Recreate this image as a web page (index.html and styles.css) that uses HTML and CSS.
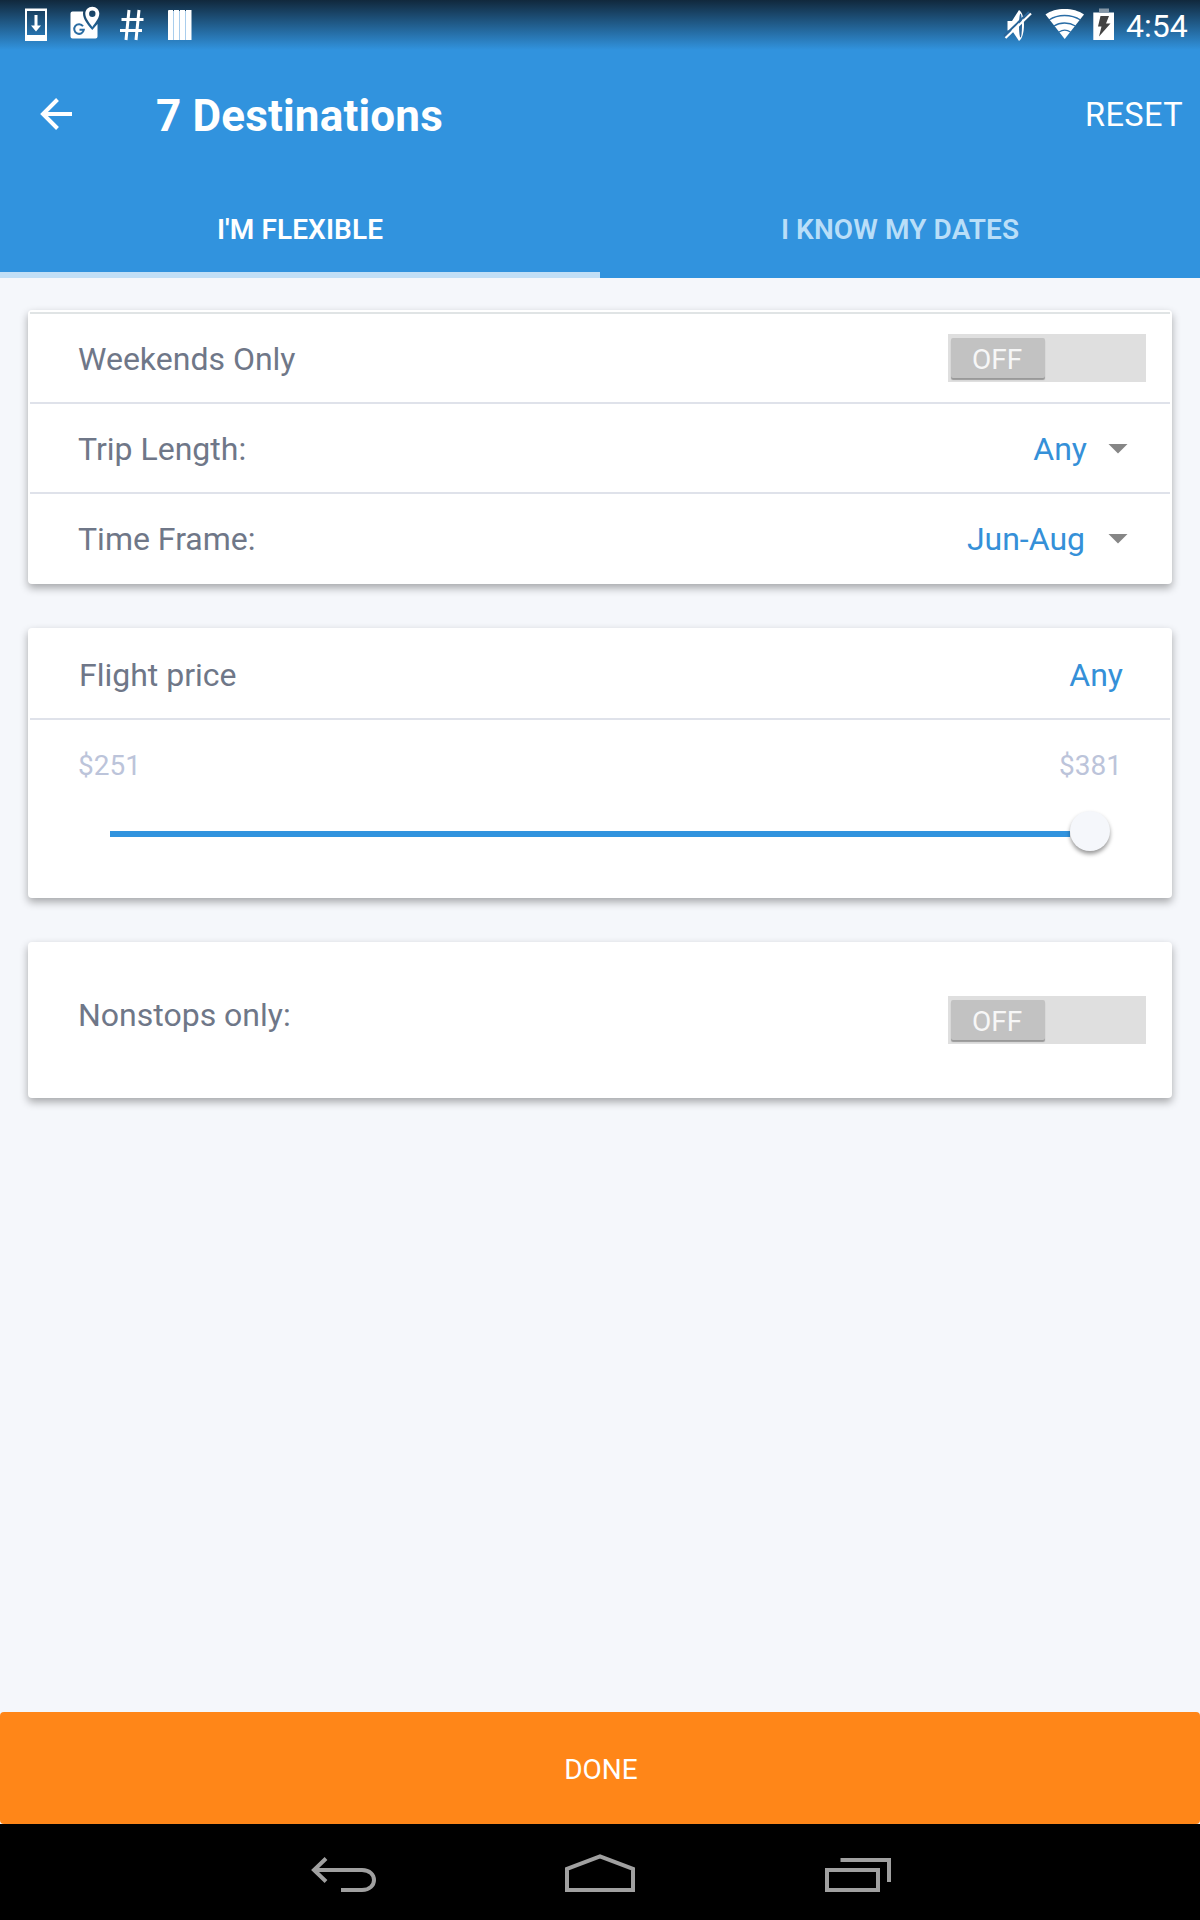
FILE: index.html
```html
<!DOCTYPE html>
<html lang="en">
<head>
<meta charset="utf-8">
<title>7 Destinations</title>
<link rel="stylesheet" href="styles.css">
</head>
<body>
<div class="screen">
  <header class="header">
    <div class="status">
      <svg class="status-left" width="200" height="48" viewBox="0 0 200 48" fill="#fff">
        <path fill-rule="evenodd" d="M25 8.500h22V41H25zM27 11v24h18V11z"/>
        <path d="M34.500 15h3v10.500H41L36 31.500l-5-6h3.500z"/>
        <path d="M72.500 11.500h10.700C82 17 86 23 92.300 30L97.500 24V36.500a2 2 0 0 1-2 2H72.500a2 2 0 0 1-2-2v-23a2 2 0 0 1 2-2z"/>
        <path fill-rule="evenodd" d="M92.300 6.800c-4 0-7 3-7 6.800 0 4.700 4 9 7 13.500 3-4.500 7-8.800 7-13.500C99.300 9.800 96.300 6.800 92.300 6.800zm0 3.700a3.200 3.200 0 1 1 0 6.400 3.200 3.200 0 0 1 0-6.400z"/>
        <path fill="none" stroke="#2b6da3" stroke-width="2" d="M83 26.300a4.800 4.800 0 1 0 .8 3.500H79.500"/>
        <path fill="none" stroke="#fff" stroke-width="3" d="M129 10l-3 30M139 10l-3 30M121.500 19.500h22M120 30.500h22"/>
        <path d="M168.500 10h4.500v30h-5V11zM174 10h5v30h-5zM180 10h5v30h-5zM186 10h5.500v30H186z"/>
        <path fill="#a9cdec" d="M173 11h1v29h-1zM179 11h1v29h-1zM185 11h1v29h-1z"/>
      </svg>
      <svg class="status-right" width="124" height="48" viewBox="1000 0 124 48" fill="#fff">
        <path d="M1007.500 21h4.500l7-11c3.300 2 5 8 5 15s-1.700 14-5 16l-7-10.500h-4.500z"/>
        <ellipse cx="1020.500" cy="25.500" rx="1.500" ry="12" fill="#29659a"/>
        <path fill="none" stroke="#29659a" stroke-width="2" d="M1004 36L1029 12"/>
        <path fill="none" stroke="#fff" stroke-width="2.200" d="M1005.500 38L1031 13.500"/>
        <path d="M1045.500 14.500C1055 7.200 1074 7.200 1084 14.500L1064.700 39z"/>
        <path fill="none" stroke="#2a6da6" stroke-width="1.300" d="M1049 20c9-6 22-6 31.500 0M1054 26c6-4 15-4 21.500 0M1059 32c3.500-2.300 8-2.300 11.500 0"/>
        <path d="M1093.300 12.500h20.700V40h-20.700z"/><path fill="#8496a6" d="M1099 8.500h10v4h-10z"/>
        <path fill="#424242" d="M1100.500 16h8.500l-3 7.500h4.500L1099 36.500l2.500-10H1098z"/>
      </svg>
      <span class="clock">4:54</span>
    </div>
    <div class="toolbar">
      <svg class="back" width="32" height="32" viewBox="0 0 32 32" fill="none" stroke="#fff" stroke-width="4"><path d="M17.500 1.500L3 16l14.500 14.500M3 16h29"/></svg>
      <h1 class="title">7 Destinations</h1>
      <span class="reset">RESET</span>
    </div>
    <nav class="tabs">
      <div class="tab tab-active">I'M FLEXIBLE</div>
      <div class="tab">I KNOW MY DATES</div>
    </nav>
  </header>
  <main class="content">
    <section class="card card-dates">
      <div class="row row-first"><span class="label">Weekends Only</span><div class="switch"><span class="knob">OFF</span></div></div>
      <div class="row"><span class="label">Trip Length:</span><span class="value value-trip">Any</span><i class="caret"></i></div>
      <div class="row"><span class="label">Time Frame:</span><span class="value value-frame">Jun-Aug</span><i class="caret"></i></div>
    </section>
    <section class="card">
      <div class="row row-price"><span class="label">Flight price</span><span class="value">Any</span></div>
      <div class="price">
        <div class="range"><span>$251</span><span>$381</span></div>
        <div class="slider"><div class="track"></div><div class="thumb"></div></div>
      </div>
    </section>
    <section class="card card-nonstop">
      <span class="label">Nonstops only:</span><div class="switch"><span class="knob">OFF</span></div>
    </section>
  </main>
  <div class="done">DONE</div>
  <footer class="navbar">
    <svg width="1200" height="96" viewBox="0 0 1200 96" fill="none" stroke="#a0a0a0" stroke-width="4">
      <path d="M326 34.500L314 46l12 11.500M314 46h48c16 0 16 20 0 20h-21"/>
      <path d="M567 66V45l33-12.500L633 45v21z"/>
      <path d="M827 46h51v20h-51zM840.500 36H889v22"/>
    </svg>
  </footer>
</div>
</body>
</html>
```
FILE: styles.css
```css
* { box-sizing: border-box; }
body { margin: 0; font-family: Roboto, sans-serif; }
.screen { width: 1200px; height: 1920px; display: flex; flex-direction: column; background: #f5f7fb; overflow: hidden; }
.header { height: 278px; background: linear-gradient(#11283c 0, #3193de 50px); display: flex; flex-direction: column; color: #fff; }
.status { height: 50px; display: flex; }
.status-right { margin-left: auto; }
.clock { width: 76px; padding-left: 2px; font-size: 32px; line-height: 52px; }
.toolbar { height: 129px; display: flex; align-items: center; padding: 0 17px 0 40px; }
.back { margin-bottom: 1px; }
.title { margin: 3px 0 0 84px; font-size: 44px; font-weight: 700; line-height: 52px; letter-spacing: .17px; }
.reset { margin: 1px 0 0 auto; font-size: 32.500px; line-height: 38px; letter-spacing: .4px; }
.tabs { flex: 1; display: flex; font-size: 28px; font-weight: 600; letter-spacing: .1px; }
.tab { flex: 1; display: flex; justify-content: center; align-items: center; padding-top: 7px; color: #b9def8; border-bottom: 6px solid transparent; }
.tab-active { color: #fff; border-color: #c1dff6; }
.content { flex: 1; padding: 32px 28px 0; display: flex; flex-direction: column; gap: 44px; }
.card { background: #fff; border-radius: 4px; box-shadow: 0 4px 9px rgba(0,0,0,.33); padding: 0 2px; }
.card-dates { height: 274px; }
.row { height: 90px; display: flex; align-items: center; padding: 0 48px; border-top: 2px solid #dfe2ea; }
.row-first { margin-top: 2px; padding-right: 24px; border-color: #e0e4e5; }
.row-price { padding: 2px 47px 0 49px; border: 0; }
.label { font-size: 32px; line-height: 38px; padding-top: 2px; color: #6f7788; margin-right: auto; }
.value { font-size: 32px; line-height: 38px; padding-top: 2px; color: #3590d8; }
.value-trip { margin-right: -1px; }
.value-frame { margin-right: 1px; }
.caret { width: 20px; height: 10px; margin: 1px -6px 0 22px; background: #868686; clip-path: polygon(0 0, 100% 0, 50% 100%); }
.switch { width: 198px; height: 48px; background: #dfdfdf; padding: 4px 3px; }
.knob { display: block; width: 94px; height: 40px; padding-right: 2px; border-radius: 2px; background: #c2c2c2; box-shadow: 0 2px 1px #999; color: #f7f7f7; font-size: 28px; line-height: 43px; text-align: center; }
.price { height: 180px; border-top: 2px solid #dfe2ea; }
.range { display: flex; justify-content: space-between; padding: 29px 48px 0 48px; font-size: 28px; line-height: 34px; color: #bcc4da; }
.slider { display: flex; align-items: center; height: 40px; margin: 28px 60px 0 80px; }
.track { flex: 1; height: 6px; margin-top: 6px; background: #3193de; }
.thumb { width: 40px; height: 40px; border-radius: 50%; background: #f5f7fb; box-shadow: 0 3px 4px rgba(0,0,0,.4); }
.card-nonstop { height: 156px; padding: 0 26px 0 50px; display: flex; align-items: center; }
.card-nonstop .label { margin-top: -12px; }
.done { height: 112px; padding-left: 2px; border-radius: 4px; background: #ff8618; color: #fff; font-size: 28px; line-height: 116px; text-align: center; }
.navbar { height: 96px; background: #000; }
```
